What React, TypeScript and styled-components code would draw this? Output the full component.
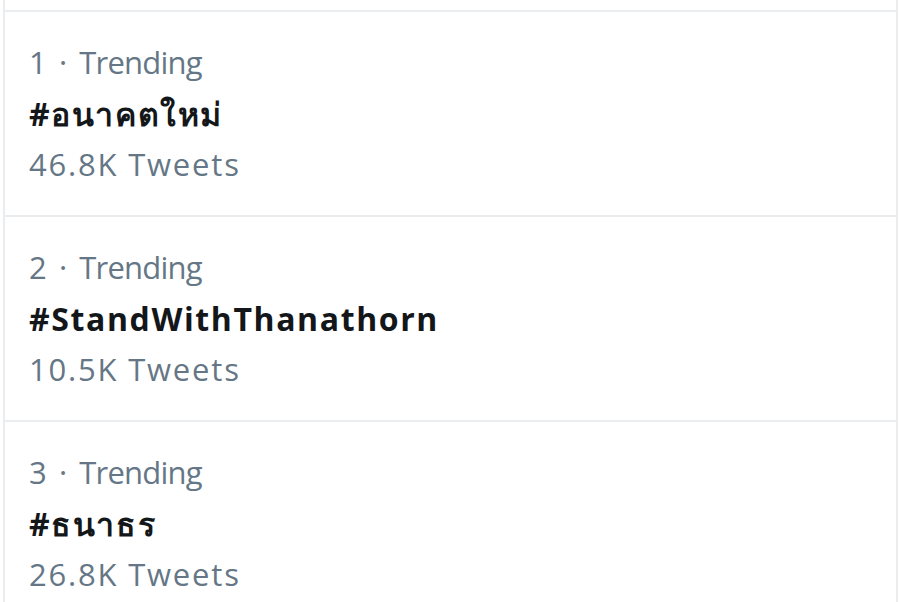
import React from "react";
import styled, { createGlobalStyle } from "styled-components";

const GlobalStyle = createGlobalStyle`
  html, body {
    margin: 0;
    padding: 0;
    background: #ffffff;
    overflow: hidden;
  }
`;

const StyledPanel = styled.div`
  margin-left: 3px;
  width: 891px;
  height: 602px;
  padding-top: 10px;
  border-left: 2px solid #e9edf0;
  border-right: 2px solid #e9edf0;
  background: #ffffff;
  font-family: "Segoe UI", "Open Sans", "Noto Sans", sans-serif;
`;

const StyledItem = styled.div`
  border-top: 2px solid #e9edf0;
  padding: 25px 24px 24px 24px;
  height: 205px;
  box-sizing: border-box;
`;

const StyledMeta = styled.div<{ $spacing?: number }>`
  font-size: 31px;
  line-height: 51px;
  color: #657786;
  letter-spacing: ${(p) => p.$spacing ?? 0}px;
  white-space: nowrap;
`;

const StyledDot = styled.span`
  margin: 0 13px 0 13px;
`;

const StyledTitle = styled.div`
  font-size: 32px;
  line-height: 51px;
  font-weight: 700;
  color: #14171a;
  letter-spacing: 1.6px;
  white-space: nowrap;
`;

type Trend = { rank: number; tag: string; count: string };

const trends: Trend[] = [
  { rank: 1, tag: "#อนาคตใหม่", count: "46.8K" },
  { rank: 2, tag: "#StandWithThanathorn", count: "10.5K" },
  { rank: 3, tag: "#ธนาธร", count: "26.8K" },
];

const App = () => {
  return (
    <>
      <GlobalStyle />
      <StyledPanel>
        {trends.map((t) => (
          <StyledItem key={t.rank}>
            <StyledMeta $spacing={-0.8}>
              {t.rank}
              <StyledDot>·</StyledDot>Trending
            </StyledMeta>
            <StyledTitle>{t.tag}</StyledTitle>
            <StyledMeta $spacing={1.8}>{t.count} Tweets</StyledMeta>
          </StyledItem>
        ))}
      </StyledPanel>
    </>
  );
};

export default App;
